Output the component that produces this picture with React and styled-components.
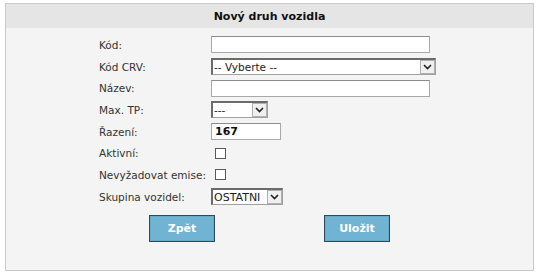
import React from "react";
import styled, { createGlobalStyle } from "styled-components";

const Global = createGlobalStyle`
  html, body { margin: 0; padding: 0; background: #ffffff; }
  body { font-family: "DejaVu Sans", Verdana, sans-serif; font-size: 11px; color: #222; }
`;

const Panel = styled.div`
  margin: 3px 0 0 5px;
  width: 527px;
  height: 266px;
  border: 1px solid #c9c9c9;
  background: #f4f4f4;
  display: flex;
  flex-direction: column;
`;

const Header = styled.div`
  height: 24px;
  background: #e5e5e5;
  display: flex;
  align-items: center;
  justify-content: center;
  font-weight: bold;
  font-size: 11px;
  color: #111;
`;

const Form = styled.div`
  display: grid;
  grid-template-columns: 112px 1fr;
  grid-auto-rows: 21.7px;
  padding: 6px 0 0 93px;
`;

const Label = styled.div`
  display: flex;
  align-items: center;
  font-size: 10.5px;
  color: #333;
  white-space: nowrap;
`;

const Cell = styled.div`
  display: flex;
  align-items: center;
`;

const TextInput = styled.div`
  box-sizing: border-box;
  width: ${(p) => p.$w}px;
  height: 17px;
  background: #fff;
  border: 1px solid #a9a9a9;
  border-top-color: #8c8c8c;
  display: flex;
  align-items: center;
  padding-left: 3px;
  font-weight: bold;
  font-size: 11px;
  color: #111;
`;

const Select = styled.div`
  box-sizing: border-box;
  width: ${(p) => p.$w}px;
  height: 17px;
  background: #fff;
  border: 1px solid #a0a0a0;
  border-left: 2px solid #6b6b6b;
  border-top: 2px solid #6b6b6b;
  display: flex;
  align-items: stretch;
`;

const SelectText = styled.div`
  flex: 1;
  display: flex;
  align-items: center;
  padding-left: 1px;
  font-size: ${(p) => (p.$big ? "11px" : "10.5px")};
  color: #222;
  overflow: hidden;
  white-space: nowrap;
`;

const ArrowBox = styled.div`
  box-sizing: border-box;
  width: 15px;
  border: 1px solid #b0b0b0;
  background: #f0f0f0;
  display: flex;
  align-items: center;
  justify-content: center;
`;

const Check = styled.div`
  box-sizing: border-box;
  width: 11px;
  height: 11px;
  margin-left: 4px;
  border: 1px solid #5a5a5a;
  background: #fff;
`;

const Buttons = styled.div`
  display: flex;
  justify-content: center;
  gap: 109px;
  margin-top: 7px;
`;

const Button = styled.div`
  box-sizing: border-box;
  width: 66px;
  height: 27px;
  background: #71b3d3;
  border: 1px solid #2e4a58;
  box-shadow: inset 0 0 0 1px #6aa9c8;
  color: #fff;
  font-weight: bold;
  font-size: 11px;
  display: flex;
  align-items: center;
  justify-content: center;
`;

const Arrow = () => (
  <ArrowBox>
    <svg width="9" height="6" viewBox="0 0 9 6">
      <path d="M1 1 L4.5 4.5 L8 1" fill="none" stroke="#222" strokeWidth="1.6" />
    </svg>
  </ArrowBox>
);

export default function App() {
  return (
    <>
      <Global />
      <Panel>
        <Header>Nový druh vozidla</Header>
        <Form>
          <Label>Kód:</Label>
          <Cell><TextInput $w={219} /></Cell>
          <Label>Kód CRV:</Label>
          <Cell>
            <Select $w={225}>
              <SelectText>-- Vyberte --</SelectText>
              <Arrow />
            </Select>
          </Cell>
          <Label>Název:</Label>
          <Cell><TextInput $w={219} /></Cell>
          <Label>Max. TP:</Label>
          <Cell>
            <Select $w={57}>
              <SelectText>---</SelectText>
              <Arrow />
            </Select>
          </Cell>
          <Label>Řazení:</Label>
          <Cell><TextInput $w={70}>167</TextInput></Cell>
          <Label>Aktivní:</Label>
          <Cell><Check /></Cell>
          <Label>Nevyžadovat emise:</Label>
          <Cell><Check /></Cell>
          <Label>Skupina vozidel:</Label>
          <Cell>
            <Select $w={72}>
              <SelectText $big>OSTATNI</SelectText>
              <Arrow />
            </Select>
          </Cell>
        </Form>
        <Buttons>
          <Button>Zpět</Button>
          <Button>Uložit</Button>
        </Buttons>
      </Panel>
    </>
  );
}
